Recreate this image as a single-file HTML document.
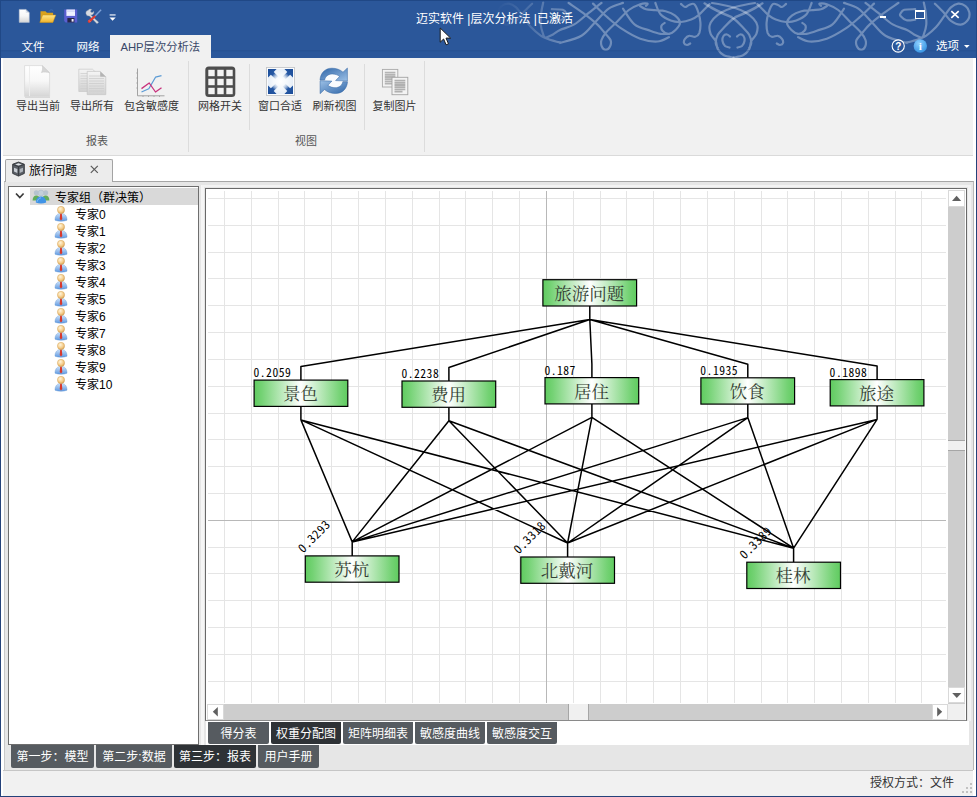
<!DOCTYPE html>
<html lang="zh-CN">
<head>
<meta charset="utf-8">
<title>迈实软件 |层次分析法 |已激活</title>
<style>
*{box-sizing:border-box;margin:0;padding:0}
html,body{width:977px;height:797px;overflow:hidden;background:#fff}
body{position:relative;font-family:"Liberation Sans","Noto Sans CJK SC",sans-serif;font-size:12px;color:#1e1e1e}
.abs{position:absolute}
#hdr{left:0;top:0;width:977px;height:58px;background:#2b579a;border:1px solid #204886;border-bottom:none}
#title{left:416px;top:9.5px;color:#fff;font-size:12px;line-height:18px;white-space:nowrap}
.rtab{top:37px;height:21px;line-height:20px;color:#fff;font-size:11.5px;text-align:center;white-space:nowrap}
#rtab3{left:110px;top:35px;width:100.500px;height:23px;background:#f1f1f1;color:#3a4868;line-height:25px;font-size:11.300px}
#ribbon{left:3px;top:58px;width:970px;height:98px;background:#f1f1f1;border-bottom:1px solid #dadada}
.rbtn{top:98.5px;font-size:11px;line-height:14px;color:#333;white-space:nowrap;text-align:center;width:70px}
.rgrp{top:134px;font-size:11px;line-height:14px;color:#555;text-align:center;width:60px}
.rsep{top:63px;width:1px;height:88px;background:#dcdcdc}
#bl{left:0;top:58px;width:1px;height:739px;background:#24427a}
#br{left:976px;top:58px;width:1px;height:739px;background:#24427a}
#bb{left:0;top:796px;width:977px;height:1px;background:#24427a}
#doctab{left:5px;top:159px;width:107.500px;height:23px;background:#ececec;border:1px solid #a3a3a3;border-bottom:none;border-radius:2px 2px 0 0}
#doctab span{position:absolute;left:23px;top:1.5px;font-size:12px;line-height:18px;color:#000;white-space:nowrap}
#panel{left:4px;top:181px;width:969.500px;height:589px;background:#e6e6e6;border-top:1px solid #a6a6a6;border-right:1px solid #b8b8b8;border-left:1px solid #c8c8c8}
#tree{left:8px;top:186px;width:191px;height:559px;background:#fff;border:1px solid #6e6e6e}
.trow{left:55px;height:17px;margin-top:1.5px;line-height:17px;font-size:12px;color:#000;white-space:nowrap}
.tchild{left:75px}
#canvasbox{left:205px;top:188px;width:762px;height:533px;border:1px solid #696969;border-bottom-color:#8a8a8a;background:#fff}
#vsb{left:948px;top:190px;width:16.500px;height:513.500px;background:#cdcdcd}
#hsb{left:207px;top:703.500px;width:741px;height:16px;background:#cdcdcd}
.sbtn{background:#fff;border:1px solid #d9d9d9;width:17px;height:17px}
#corner{left:948px;top:703.500px;width:16.500px;height:16px;background:#f0f0f0}
.itab{top:722px;height:22px;line-height:24px;color:#fff;font-size:12px;text-align:center;background:#565b60;white-space:nowrap;border-radius:0 0 2px 2px}
.itab.on{background:#2e3236}
.btab{top:745px;height:22.500px;line-height:24px;color:#fff;font-size:12px;text-align:center;background:#565b60;white-space:nowrap;border-radius:0 0 2px 2px}
.btab.on{background:#2e3236}
#status{left:3px;top:770px;width:970px;height:26px;background:#f1f1f1;border-top:1px solid #c6c6c6}
#stxt{left:870px;top:775px;font-size:12px;line-height:16px;color:#333;white-space:nowrap}
svg{position:absolute;overflow:visible}
.nd{font-family:"Liberation Serif","Noto Serif CJK SC",serif;font-size:17.5px;fill:#344034;text-anchor:middle}
.wl{font-family:"Noto Sans Mono CJK SC","Liberation Mono",monospace;font-size:11.6px;letter-spacing:0.5px;fill:#000}
</style>
</head>
<body>
<div id="hdr" class="abs"></div>
<!--ORN--><svg class="abs" style="left:0;top:0" width="977" height="58" viewBox="0 0 977 58"><defs><linearGradient id="ofg" gradientUnits="userSpaceOnUse" x1="496" y1="0" x2="566" y2="0"><stop offset="0" stop-color="#fff" stop-opacity="0"/><stop offset="1" stop-color="#fff" stop-opacity="1"/></linearGradient><mask id="ofm" maskUnits="userSpaceOnUse" x="0" y="0" width="977" height="58"><rect x="0" y="0" width="977" height="58" fill="url(#ofg)"/></mask></defs><g fill="none" stroke="#fff" stroke-opacity="0.32" stroke-width="2.200" stroke-linecap="round"><g mask="url(#ofm)"><path id="orn" d="M545.6 38.0C546.8 37.4 550.6 35.8 553.0 34.5C555.4 33.2 556.5 31.7 560.0 30.0C563.5 28.3 569.5 27.2 574.3 24.4C579.1 21.5 584.2 16.5 588.7 12.9C593.2 9.3 599.4 4.6 601.5 2.9M560.0 43.0C563.6 41.8 575.5 39.4 581.5 35.8C587.5 32.2 591.3 26.0 595.8 21.5C600.3 17.0 604.2 11.7 608.7 8.6C613.2 5.5 620.6 3.8 623.0 2.9M568.6 2.9C571.0 4.6 578.2 9.3 583.0 12.9C587.8 16.5 593.7 21.2 597.2 24.4C600.7 27.6 601.8 29.4 604.0 32.0C606.2 34.6 609.5 37.6 610.5 40.0C611.5 42.4 610.8 44.9 610.0 46.5C609.2 48.1 607.2 49.8 605.8 49.8C604.4 49.8 602.5 48.1 601.8 46.5C601.1 44.9 600.7 42.4 601.5 40.0C602.3 37.6 603.9 35.1 606.5 32.0C609.1 28.9 613.6 25.2 617.3 21.5C621.0 17.8 625.0 12.9 628.8 10.0C632.6 7.1 637.1 5.4 640.2 4.3C643.3 3.2 646.4 3.4 647.4 3.6C648.4 3.9 646.2 5.4 646.0 5.8M593.0 3.6C595.4 5.9 602.5 13.0 607.3 17.2C612.1 21.4 616.1 25.1 621.6 28.7C627.1 32.3 634.2 36.6 640.2 38.7C646.2 40.8 652.6 41.8 657.4 41.5C662.2 41.2 667.0 37.9 668.9 37.2M623.0 8.6C624.9 11.2 630.0 20.7 634.5 24.4C639.0 28.1 645.9 29.1 650.2 30.7C654.5 32.3 657.2 33.3 660.5 33.8C663.8 34.3 668.2 33.8 669.7 33.8M640.0 6.0C641.0 6.5 643.4 8.5 646.0 9.2C648.6 9.9 652.1 9.8 655.4 10.2C658.7 10.5 662.4 10.4 665.6 11.3C668.8 12.2 672.4 13.5 674.8 15.4C677.2 17.3 679.8 20.1 680.0 22.5C680.2 24.9 677.7 27.8 675.8 29.7C673.9 31.6 670.9 33.6 668.7 33.8C666.5 34.0 663.7 32.1 662.5 30.7C661.3 29.3 661.1 26.9 661.5 25.6C661.9 24.3 664.1 23.4 664.6 23.0M655.4 3.0C656.2 4.9 658.0 11.4 660.5 14.3C663.0 17.2 667.3 19.2 670.7 20.5C674.1 21.8 677.6 22.2 681.0 22.0C684.4 21.8 688.3 20.6 691.2 19.5C694.1 18.4 695.9 17.3 698.3 15.4C700.7 13.5 703.6 10.1 705.5 8.2C707.4 6.3 708.9 4.8 709.6 4.1M681.0 4.0C681.7 4.5 683.7 6.8 685.0 7.0C686.3 7.2 687.5 5.5 689.0 5.0C690.5 4.5 692.7 2.9 694.2 4.1C695.8 5.3 697.3 9.2 698.3 12.3C699.3 15.4 700.2 19.1 700.4 22.5C700.6 25.9 700.2 30.4 699.4 32.8C698.5 35.2 697.0 36.3 695.3 36.8C693.6 37.3 690.8 35.4 689.1 35.8C687.4 36.1 685.9 37.7 685.0 38.9C684.1 40.1 683.7 42.0 684.0 43.0C684.3 44.0 686.0 44.9 687.0 45.0C688.0 45.1 689.7 43.8 690.2 43.5M755.0 3.0C753.2 3.3 747.8 4.2 744.0 5.0C740.2 5.8 735.7 6.8 732.0 8.0C728.3 9.2 724.9 10.5 721.9 12.2C718.9 13.9 715.8 16.2 713.7 18.4C711.7 20.6 710.1 23.0 709.6 25.6C709.1 28.2 709.6 31.2 710.6 33.8C711.6 36.4 714.5 38.5 715.7 41.0C716.9 43.5 716.4 46.7 717.8 49.1C719.2 51.5 721.3 53.9 723.9 55.3C726.5 56.7 731.9 57.2 733.5 57.6M761.5 4.1C760.4 4.8 757.8 6.7 755.0 8.2C752.2 9.7 748.6 11.6 745.0 13.3C741.4 15.0 737.0 16.1 733.5 18.5C730.0 20.9 726.6 24.9 724.0 27.6C721.4 30.3 719.2 32.2 717.8 34.8C716.4 37.4 715.7 40.8 715.7 43.0C715.7 45.2 717.4 47.2 717.8 48.0M730.0 36.5C729.5 36.2 728.1 34.6 727.0 34.5C725.9 34.4 724.2 34.9 723.5 36.0C722.8 37.1 722.2 39.3 722.5 41.0C722.8 42.7 723.8 44.9 725.0 46.0C726.2 47.1 728.8 47.2 729.5 47.5M762.5 3.3C761.4 3.9 758.8 5.7 756.0 7.2C753.2 8.7 749.5 10.6 746.0 12.3C742.5 14.0 736.8 16.4 735.0 17.2M532.1 3.7C530.7 5.1 526.2 9.4 523.5 12.3C520.8 15.2 519.0 18.8 516.1 20.9C513.2 22.9 509.2 24.8 506.3 24.6C503.4 24.4 500.3 21.8 498.9 19.7C497.5 17.6 497.3 14.6 497.7 12.3C498.1 10.0 499.5 7.5 501.4 6.1C503.2 4.7 506.4 3.5 508.8 3.7C511.2 3.9 513.6 5.2 516.1 7.4C518.6 9.7 521.0 13.9 523.5 17.2C526.0 20.5 528.0 23.9 530.9 27.0C533.8 30.1 538.2 33.8 540.7 35.6C543.2 37.4 544.8 37.6 545.6 38.0M543.2 2.5C542.9 4.1 541.7 8.6 541.3 12.3C540.9 16.0 540.4 20.9 540.7 24.6C541.0 28.3 542.4 32.2 543.2 34.4C544.0 36.6 543.4 36.8 545.6 38.0C547.9 39.2 554.2 41.1 556.7 41.8C559.2 42.5 559.9 42.3 560.5 42.4M551.8 9.2C553.6 9.3 560.3 9.1 562.8 9.8C565.2 10.5 565.9 12.5 566.5 13.5C567.1 14.5 567.5 14.9 566.5 16.0C565.5 17.1 563.0 19.7 560.5 20.3C558.0 20.9 553.2 19.8 551.8 19.7"/></g><use href="#orn" transform="translate(1467.0 0) scale(-1 1)"/></g><rect x="0" y="50" width="977" height="1.500" fill="#1f4a8a" fill-opacity="0.35"/></svg>
<!--/ORN-->
<div id="title" class="abs">迈实软件 |层次分析法 |已激活</div>
<div class="abs rtab" style="left:10px;width:46px">文件</div>
<div class="abs rtab" style="left:65px;width:46px">网络</div>
<div id="rtab3" class="abs rtab">AHP层次分析法</div>
<div id="ribbon" class="abs"></div>
<div id="bl" class="abs"></div><div id="br" class="abs"></div><div id="bb" class="abs"></div>

<div class="abs rbtn" style="left:3px">导出当前</div>
<div class="abs rbtn" style="left:57px">导出所有</div>
<div class="abs rbtn" style="left:116.5px">包含敏感度</div>
<div class="abs rbtn" style="left:185px">网格开关</div>
<div class="abs rbtn" style="left:245px">窗口合适</div>
<div class="abs rbtn" style="left:299.5px">刷新视图</div>
<div class="abs rbtn" style="left:359.500px">复制图片</div>
<div class="abs rgrp" style="left:67px">报表</div>
<div class="abs rgrp" style="left:276px">视图</div>
<div class="abs rsep" style="left:188px;top:61px;height:91px"></div>
<div class="abs rsep" style="left:249px;top:64px;height:66px"></div>
<div class="abs rsep" style="left:364px;top:64px;height:66px"></div>
<div class="abs rsep" style="left:424px;top:61px;height:91px"></div>

<div id="panel" class="abs"></div>
<div class="abs" style="left:200.500px;top:185px;width:3.300px;height:560px;background:#f6f6f6"></div>
<div class="abs" style="left:202px;top:184.500px;width:769px;height:2.700px;background:#f3f3f3"></div>
<div class="abs" style="left:968px;top:185px;width:3.300px;height:536px;background:#f3f3f3"></div>
<div id="doctab" class="abs"><span>旅行问题</span></div>
<div id="tree" class="abs"></div>
<div class="abs" style="left:30px;top:188px;width:168px;height:17px;background:#d9d9d9"></div>
<div class="abs trow" style="top:188px">专家组（群决策）</div>
<div class="abs trow tchild" style="top:205px">专家0</div>
<div class="abs trow tchild" style="top:222px">专家1</div>
<div class="abs trow tchild" style="top:239px">专家2</div>
<div class="abs trow tchild" style="top:256px">专家3</div>
<div class="abs trow tchild" style="top:273px">专家4</div>
<div class="abs trow tchild" style="top:290px">专家5</div>
<div class="abs trow tchild" style="top:307px">专家6</div>
<div class="abs trow tchild" style="top:324px">专家7</div>
<div class="abs trow tchild" style="top:341px">专家8</div>
<div class="abs trow tchild" style="top:358px">专家9</div>
<div class="abs trow tchild" style="top:375px">专家10</div>

<div class="abs" style="left:206px;top:721px;width:763px;height:24px;background:#fff"></div>
<div id="canvasbox" class="abs"></div>
<!--DIAGRAM-->
<svg class="abs" style="left:206px;top:189px" width="742" height="514" viewBox="206 189 742 514">
<defs><linearGradient id="ng" x1="0" y1="0" x2="1" y2="0"><stop offset="0" stop-color="#5fcb5f"/><stop offset="0.08" stop-color="#74d274"/><stop offset="0.5" stop-color="#ffffff"/><stop offset="0.92" stop-color="#74d274"/><stop offset="1" stop-color="#5fcb5f"/></linearGradient></defs>
<path d="M224.5 191V703M251.5 191V703M278.5 191V703M304.5 191V703M331.5 191V703M358.5 191V703M385.5 191V703M412.5 191V703M439.5 191V703M465.5 191V703M492.5 191V703M519.5 191V703M573.5 191V703M600.5 191V703M626.5 191V703M653.5 191V703M680.5 191V703M707.5 191V703M734.5 191V703M761.5 191V703M787.5 191V703M814.5 191V703M841.5 191V703M868.5 191V703M895.5 191V703M921.5 191V703M208 198.5H946M208 225.5H946M208 252.5H946M208 278.5H946M208 305.5H946M208 332.5H946M208 359.5H946M208 386.5H946M208 413.5H946M208 439.5H946M208 466.5H946M208 493.5H946M208 547.5H946M208 573.5H946M208 600.5H946M208 627.5H946M208 654.5H946M208 681.5H946" stroke="#e5e5e5" stroke-width="1" fill="none" shape-rendering="crispEdges"/>
<path d="M546.5 191V703M208 520.5H946" stroke="#b8b8b8" stroke-width="1" fill="none" shape-rendering="crispEdges"/>
<text class="wl" x="253.5" y="377.4">0.2059</text>
<text class="wl" x="401.4" y="378.3">0.2238</text>
<text class="wl" x="544.4" y="374.9">0.187</text>
<text class="wl" x="700.3" y="375.1">0.1935</text>
<text class="wl" x="829.6" y="376.9">0.1898</text>
<text class="wl" style="font-size:12.2px" transform="translate(303.3 553.4) rotate(-45)" x="0" y="0">0.3293</text>
<text class="wl" style="font-size:12.2px" transform="translate(518.8 554.5) rotate(-45)" x="0" y="0">0.3318</text>
<text class="wl" style="font-size:12.2px" transform="translate(744.8 559.7) rotate(-45)" x="0" y="0">0.3389</text>
<path d="M589.8 306.0V319.5M589.8 319.5L300.9 366.6V380.1M300.9 406.4V419.9M300.9 419.9L352.2 541.9M300.9 419.9L567.6 543.0M300.9 419.9L793.6 548.2M589.8 319.5L448.9 367.5V381.0M448.9 407.3V420.8M448.9 420.8L352.2 541.9M448.9 420.8L567.6 543.0M448.9 420.8L793.6 548.2M589.8 319.5L591.9 364.1V377.6M591.9 403.9V417.4M591.9 417.4L352.2 541.9M591.9 417.4L567.6 543.0M591.9 417.4L793.6 548.2M589.8 319.5L747.8 364.3V377.8M747.8 404.1V417.6M747.8 417.6L352.2 541.9M747.8 417.6L567.6 543.0M747.8 417.6L793.6 548.2M589.8 319.5L877.1 366.1V379.6M877.1 405.9V419.4M877.1 419.4L352.2 541.9M877.1 419.4L567.6 543.0M877.1 419.4L793.6 548.2M352.2 541.9V555.9M567.6 543.0V557.0M793.6 548.2V562.2" stroke="#000" stroke-width="1.500" fill="none" stroke-linejoin="round"/>
<rect x="542.9" y="279.7" width="93.7" height="26.3" fill="url(#ng)" stroke="#000" stroke-width="1.2"/><text class="nd" x="589.2" y="299.8">旅游问题</text>
<rect x="254.1" y="380.1" width="93.7" height="26.3" fill="url(#ng)" stroke="#000" stroke-width="1.2"/><text class="nd" x="300.4" y="400.2">景色</text>
<rect x="402.0" y="381.0" width="93.7" height="26.3" fill="url(#ng)" stroke="#000" stroke-width="1.2"/><text class="nd" x="448.4" y="401.1">费用</text>
<rect x="545.0" y="377.6" width="93.7" height="26.3" fill="url(#ng)" stroke="#000" stroke-width="1.2"/><text class="nd" x="591.4" y="397.7">居住</text>
<rect x="700.9" y="377.8" width="93.7" height="26.3" fill="url(#ng)" stroke="#000" stroke-width="1.2"/><text class="nd" x="747.2" y="397.9">饮食</text>
<rect x="830.2" y="379.6" width="93.7" height="26.3" fill="url(#ng)" stroke="#000" stroke-width="1.2"/><text class="nd" x="876.6" y="399.7">旅途</text>
<rect x="305.3" y="555.9" width="93.7" height="26.3" fill="url(#ng)" stroke="#000" stroke-width="1.2"/><text class="nd" x="351.7" y="576.0">苏杭</text>
<rect x="520.8" y="557.0" width="93.7" height="26.3" fill="url(#ng)" stroke="#000" stroke-width="1.2"/><text class="nd" x="567.1" y="577.1">北戴河</text>
<rect x="746.8" y="562.2" width="93.7" height="26.3" fill="url(#ng)" stroke="#000" stroke-width="1.2"/><text class="nd" x="793.1" y="582.3">桂林</text>
</svg>
<!--/DIAGRAM-->
<div id="vsb" class="abs"></div>
<div id="hsb" class="abs"></div>
<div id="corner" class="abs"></div>
<div class="abs sbtn" style="left:948px;top:190px;width:16.500px"></div>
<div class="abs sbtn" style="left:948px;top:686.500px;width:16.500px;height:16px"></div>
<div class="abs sbtn" style="left:207px;top:703.500px;height:16px"></div>
<div class="abs sbtn" style="left:931.500px;top:703.500px;width:16.500px;height:16px"></div>
<div class="abs" style="left:948px;top:440px;width:16.500px;height:10.700px;background:#f0f0f0;border-top:1.500px solid #a6a6a6;border-bottom:1.500px solid #a6a6a6"></div>
<div class="abs" style="left:568.400px;top:703.500px;width:20.300px;height:16px;background:#f0f0f0;border-left:1.500px solid #a6a6a6;border-right:1.500px solid #a6a6a6"></div>

<div class="abs itab" style="left:208px;width:61px">得分表</div>
<div class="abs itab on" style="left:271px;width:70px">权重分配图</div>
<div class="abs itab" style="left:343px;width:70px">矩阵明细表</div>
<div class="abs itab" style="left:415px;width:70px">敏感度曲线</div>
<div class="abs itab" style="left:487px;width:70px">敏感度交互</div>

<div class="abs btab" style="left:11px;width:83px">第一步：模型</div>
<div class="abs btab" style="left:96px;width:76px">第二步:数据</div>
<div class="abs btab on" style="left:174px;width:82px">第三步：报表</div>
<div class="abs btab" style="left:258px;width:61px">用户手册</div>

<div id="status" class="abs"></div>
<div id="stxt" class="abs">授权方式：文件</div>
<!--ICONS-->
<svg width="0" height="0" style="left:0;top:0"><defs>
<linearGradient id="pgw" x1="0" y1="0" x2="0" y2="1"><stop offset="0" stop-color="#ffffff"/><stop offset="0.5" stop-color="#f7f7f7"/><stop offset="1" stop-color="#d6d6d6"/></linearGradient>
<linearGradient id="pgg" x1="0" y1="0" x2="0" y2="1"><stop offset="0" stop-color="#f4f4f4"/><stop offset="1" stop-color="#d2d2d2"/></linearGradient>
<linearGradient id="fld" x1="0" y1="0" x2="0" y2="1"><stop offset="0" stop-color="#ffe88a"/><stop offset="1" stop-color="#f2b32a"/></linearGradient>
<linearGradient id="rfa" x1="0" y1="0" x2="1" y2="1"><stop offset="0" stop-color="#2f66a8"/><stop offset="1" stop-color="#9cc0e6"/></linearGradient>
<linearGradient id="rfb" x1="1" y1="1" x2="0" y2="0"><stop offset="0" stop-color="#2f66a8"/><stop offset="1" stop-color="#a8c8ea"/></linearGradient>
<radialGradient id="fitg" cx="0.5" cy="0.5" r="0.6"><stop offset="0" stop-color="#ffffff"/><stop offset="0.45" stop-color="#f4f8fc"/><stop offset="1" stop-color="#dfe9f5"/></radialGradient>
<linearGradient id="ar1" x1="0" y1="0" x2="1" y2="1"><stop offset="0" stop-color="#1b4c98"/><stop offset="0.5" stop-color="#2558a4"/><stop offset="0.95" stop-color="#f0f6fb" stop-opacity="0.15"/></linearGradient>
<radialGradient id="hd" cx="0.4" cy="0.35" r="0.7"><stop offset="0" stop-color="#fff6dc"/><stop offset="0.6" stop-color="#f5cd8c"/><stop offset="1" stop-color="#d8a458"/></radialGradient>
<linearGradient id="bd" x1="0" y1="0" x2="0" y2="1"><stop offset="0" stop-color="#cfe3fa"/><stop offset="1" stop-color="#5f9ae2"/></linearGradient>
<radialGradient id="inf" cx="0.4" cy="0.3" r="0.8"><stop offset="0" stop-color="#8fd0ff"/><stop offset="1" stop-color="#2d8de0"/></radialGradient>
</defs></svg>
<!-- quick access toolbar -->
<svg style="left:18px;top:8px" width="13" height="16" viewBox="0 0 13 16"><path d="M1.2 1.4h6.8l3.3 3.2v9.8H1.2z" fill="url(#pgw)" stroke="#aebbd0" stroke-width="0.5"/><path d="M8 1.4v3.2h3.3z" fill="#5d6f8c"/><path d="M7.6 1.6l0.2 3.3 3.4 0.1" fill="#dfe5ee"/></svg>
<svg style="left:39px;top:8px" width="18" height="16" viewBox="0 0 18 16"><path d="M1.5 3.2h5l1.4 1.6h6.2v9.5H1.5z" fill="#d9a21c"/><path d="M10 3.5c1-2 3.5-2.2 4.4-0.2" fill="none" stroke="#3f6fb5" stroke-width="1"/><path d="M0.8 14.4l2.8-7.4h13.2l-2.9 7.4z" fill="url(#fld)" stroke="#c98f14" stroke-width="0.5"/></svg>
<svg style="left:63px;top:8px" width="16" height="16" viewBox="0 0 16 16"><path d="M1.2 1.5h13v13H2.6L1.2 13z" fill="#5a5fd0"/><rect x="3.4" y="1.5" width="8.6" height="6.4" fill="#eef1ff"/><rect x="3.4" y="2.6" width="8.6" height="1" fill="#c9cef5"/><rect x="4.4" y="10" width="7" height="4.5" fill="#26264a"/><rect x="8.6" y="11" width="2" height="2.6" fill="#f0f0ff"/></svg>
<svg style="left:86px;top:8px" width="17" height="16" viewBox="0 0 17 16"><path d="M2.2 2.2a2.6 2.6 0 0 1 3.6-0.6L4.4 3l0.6 1.3 1.4 0.2 1.3-1.2a2.7 2.7 0 0 1-3 3.6l8 7.4-1.7 1.4-7.6-7.8A2.7 2.7 0 0 1 2.2 2.2z" fill="#d7dbe2" stroke="#9097a4" stroke-width="0.4"/><path d="M14.6 1.2l-6 6.2 1 1 6-6.2z" fill="#7ea2d8"/><path d="M8.8 7.2l1.2 1.2-5.8 6.2a1.5 1.5 0 0 1-2.2-2z" fill="#e03a30"/><path d="M3 12.4l1.6 1.6" stroke="#f59a94" stroke-width="0.7"/></svg>
<svg style="left:109px;top:13px" width="8" height="9" viewBox="0 0 8 9"><rect x="0.6" y="1.4" width="6" height="1.1" fill="#fff"/><path d="M0.5 4.4h6.2l-3.1 3.4z" fill="#fff"/></svg>
<!-- window controls -->
<div class="abs" style="left:880px;top:15.5px;width:6.3px;height:2.8px;background:#fff"></div>
<div class="abs" style="left:915px;top:10.300px;width:9.500px;height:8.700px;border:1px solid #fff;border-top-width:2px"></div>
<svg style="left:950px;top:10px" width="10" height="9" viewBox="0 0 10 9"><path d="M1.3 1.2l7.4 6.6M8.7 1.2L1.3 7.8" stroke="#fff" stroke-width="1.7" fill="none"/></svg>
<!-- help / info / options -->
<svg style="left:891px;top:39px" width="15" height="15" viewBox="0 0 15 15"><circle cx="7.2" cy="7" r="6.1" fill="#2b579a" stroke="#fff" stroke-width="1.1"/><text x="7.2" y="10.6" font-family="Liberation Sans, sans-serif" font-weight="bold" font-size="10" fill="#fff" text-anchor="middle">?</text></svg>
<svg style="left:913px;top:39px" width="15" height="15" viewBox="0 0 15 15"><circle cx="7.3" cy="7" r="6.7" fill="url(#inf)"/><text x="7.4" y="11.2" font-family="Liberation Serif, serif" font-weight="bold" font-size="11" fill="#fff" text-anchor="middle">i</text></svg>
<div class="abs" style="left:936px;top:38px;font-size:11.5px;line-height:16px;color:#fff;white-space:nowrap">选项</div>
<svg style="left:963px;top:44px" width="8" height="5" viewBox="0 0 8 5"><path d="M1 1h5.6L3.8 4z" fill="#fff"/></svg>
<!-- ribbon large icons -->
<svg style="left:23px;top:64px" width="30" height="35" viewBox="0 0 30 35"><path d="M2 33.2h25" stroke="#d4d4d4" stroke-width="1.2"/><path d="M1.6 1.6h17.6l7.4 7.2v23.6h-25z" fill="url(#pgw)" stroke="#d9d9d9" stroke-width="0.8"/><path d="M6.5 2v30" stroke="#ededed" stroke-width="1"/><path d="M19.2 1.6c0.6 2.6 0.4 5-0.8 7 2.4-0.8 5.4-0.6 8.2 0.2z" fill="#d6d6d6" stroke="#c6c6c6" stroke-width="0.5"/></svg>
<svg style="left:77px;top:67px" width="31" height="30" viewBox="0 0 31 30"><g><path d="M1.8 2.2h13.6l5.4 5v17.3h-19z" fill="url(#pgg)" stroke="#c9c9c9" stroke-width="0.7"/><path d="M3.5 6.5h14M3.5 9h15M3.5 11.500h15M3.5 14h15M3.5 16.500h15M3.5 19h15M3.5 21.500h15" stroke="#cfcfcf" stroke-width="0.8"/></g><g><path d="M10.2 4.400h13l5.600 5.400v17.800h-18.600z" fill="url(#pgg)" stroke="#c4c4c4" stroke-width="0.7"/><path d="M12 9h11M12 11.500h15M12 14h15M12 16.500h15M12 19h15M12 21.500h15M12 24h15" stroke="#cdcdcd" stroke-width="0.8"/><path d="M23.200 4.400v5.400h5.600z" fill="#b4b4b4"/></g></svg>
<svg style="left:134px;top:66px" width="33" height="32" viewBox="0 0 33 32"><path d="M3.5 2.500v27.300h27" fill="none" stroke="#9a9a9a" stroke-width="0.9"/><path d="M2.300 7h1.200M2.300 12h1.200M2.300 17h1.200M2.300 22h1.200M9 29.800v1.200M14.500 29.800v1.200M20 29.800v1.200M25.500 29.800v1.200" stroke="#9a9a9a" stroke-width="0.8"/><path d="M7.500 26l7.300-3.200 6.700-11.600 6-1.600" fill="none" stroke="#5b9bd5" stroke-width="1.250" stroke-linejoin="round"/><path d="M7.500 22.600l7.700-5.600 6.300 9 6-4.300" fill="none" stroke="#c8327d" stroke-width="1.300" stroke-linejoin="round"/></svg>
<svg style="left:205px;top:66px" width="31" height="31" viewBox="0 0 31 31"><rect x="0.300" y="0.600" width="30" height="30.300" rx="3.500" fill="#4d4d4d"/><g fill="#f3f3f3"><rect x="3.300" y="3.800" width="6.400" height="6.400"/><rect x="12.300" y="3.800" width="6.400" height="6.400"/><rect x="21.300" y="3.800" width="6.400" height="6.400"/><rect x="3.300" y="12.800" width="6.400" height="6.400"/><rect x="12.300" y="12.800" width="6.400" height="6.400"/><rect x="21.300" y="12.800" width="6.400" height="6.400"/><rect x="3.300" y="21.800" width="6.400" height="6.400"/><rect x="12.300" y="21.800" width="6.400" height="6.400"/><rect x="21.300" y="21.800" width="6.400" height="6.400"/></g></svg>
<svg style="left:266px;top:67px" width="29" height="29" viewBox="0 0 29 29"><rect x="0.500" y="0.500" width="28" height="28" fill="#fff" stroke="#c4c6c9" stroke-width="0.900"/><rect x="1.800" y="1.800" width="25.400" height="25.400" fill="url(#fitg)"/><g id="fa"><path d="M2 2h8.600l-2.900 2.900 4.600 4.600-2.800 2.800-4.600-4.600L2 10.600z" fill="url(#ar1)"/></g><use href="#fa" transform="translate(29 0) scale(-1 1)"/><use href="#fa" transform="translate(0 29) scale(1 -1)"/><use href="#fa" transform="translate(29 29) scale(-1 -1)"/></svg>
<svg style="left:319px;top:66px" width="31" height="30" viewBox="0 0 31 30"><ellipse cx="14.700" cy="14.800" rx="9" ry="7" fill="#fafcfe"/><g id="ra"><path d="M1 14C1.500 7 6 2.200 13 2.200C17.500 2.200 21 3.600 24 6.200L28.400 2L28.400 15L16.600 14.600L20.600 10.400C18.600 8.800 16 8 13.500 8C9 8 6.400 10.400 5.600 14Z" fill="url(#rfa)" stroke="#2f62a2" stroke-width="0.500"/></g><use href="#ra" transform="rotate(180 14.750 14.850)"/></svg>
<svg style="left:381px;top:68px" width="29" height="28" viewBox="0 0 29 28"><rect x="1.400" y="1.400" width="15.400" height="17.600" fill="#f3f3f3" stroke="#a9a9a9" stroke-width="0.900"/><path d="M3.800 4.600h10.600M3.800 6.800h10.600M3.800 9h10.600M3.800 11.200h10.600M3.800 13.400h10.600M3.800 15.600h8" stroke="#b4b4b4" stroke-width="1.800"/><rect x="11" y="9.300" width="15.800" height="17.400" fill="#f3f3f3" stroke="#a4a4a4" stroke-width="0.900"/><path d="M13.500 12.600h10.800M13.500 14.800h10.800M13.500 17h10.800M13.500 19.200h10.800M13.500 21.400h10.800M13.500 23.600h8" stroke="#b0b0b0" stroke-width="1.800"/></svg>
<!-- doc tab icon -->
<svg style="left:10.500px;top:161px" width="15" height="16" viewBox="0 0 18 18" preserveAspectRatio="none"><path d="M9 1.200l7 2.400v10.400l-7 3-7-3V3.600z" fill="#5a5f66" stroke="#2e3236" stroke-width="1"/><path d="M2.300 3.900L9 6.300l6.700-2.400M9 6.300v10.400" fill="none" stroke="#2e3236" stroke-width="0.900"/><path d="M3.600 7.600l4 1.400v4.400l-4-1.600z" fill="#c9ced4"/><path d="M14.400 7.600l-4 1.400v4.400l4-1.600z" fill="#aeb4bb"/><path d="M5 3.800l4 1.300 4-1.300-4-1.200z" fill="#dfe3e7"/></svg>
<svg style="left:88.500px;top:164px" width="11" height="11" viewBox="0 0 11 11"><path d="M1.800 1.800l7 7M8.800 1.800l-7 7" stroke="#5a5a5a" stroke-width="1.200" fill="none"/></svg>
<!-- tree icons -->
<svg style="left:15px;top:192px" width="10" height="8" viewBox="0 0 10 8"><path d="M1 1.500l3.800 4 3.800-4" fill="none" stroke="#3a3a3a" stroke-width="1.700"/></svg>
<svg style="left:32px;top:188px" width="18" height="16" viewBox="0 0 18 16"><circle cx="4.300" cy="4.800" r="2.500" fill="#b5c3cf"/><circle cx="13.700" cy="4.800" r="2.500" fill="#b5c3cf"/><path d="M0.600 12.500c0-3.400 1.600-5 3.800-5s3.600 1.600 3.600 5z" fill="#62ad5c"/><path d="M17.400 12.500c0-3.400-1.600-5-3.800-5s-3.600 1.600-3.600 5z" fill="#62ad5c"/><circle cx="9" cy="5" r="2.900" fill="#c3d0db" stroke="#9fb0bf" stroke-width="0.400"/><path d="M3.800 14.600c0-4.200 2.200-6.200 5.200-6.200s5.200 2 5.200 6.200c-3 1.200-7.400 1.200-10.400 0z" fill="#3f93e6"/><path d="M5 13.800c1-2.600 2.200-3.800 4-4" stroke="#8cc4f7" stroke-width="0.800" fill="none"/></svg>
<svg style="left:54px;top:205px" width="14" height="17" viewBox="0 0 14 17"><path d="M1 15.200c0-4.600 2.400-6.800 6-6.800s6 2.200 6 6.800c-3.600 1.400-8.400 1.400-12 0z" fill="url(#bd)" stroke="#5b8fd0" stroke-width="0.400"/><path d="M6.200 8.600h1.600l0.500 5.400-1.300 1.400-1.300-1.400z" fill="#d8382c"/><circle cx="7" cy="4.900" r="3.600" fill="url(#hd)" stroke="#cf9a48" stroke-width="0.400"/></svg>
<svg style="left:54px;top:222px" width="14" height="17" viewBox="0 0 14 17"><path d="M1 15.200c0-4.600 2.400-6.800 6-6.800s6 2.200 6 6.800c-3.600 1.400-8.400 1.400-12 0z" fill="url(#bd)" stroke="#5b8fd0" stroke-width="0.400"/><path d="M6.200 8.600h1.600l0.500 5.400-1.300 1.400-1.300-1.400z" fill="#d8382c"/><circle cx="7" cy="4.900" r="3.600" fill="url(#hd)" stroke="#cf9a48" stroke-width="0.400"/></svg>
<svg style="left:54px;top:239px" width="14" height="17" viewBox="0 0 14 17"><path d="M1 15.200c0-4.600 2.400-6.800 6-6.800s6 2.200 6 6.800c-3.600 1.400-8.400 1.400-12 0z" fill="url(#bd)" stroke="#5b8fd0" stroke-width="0.400"/><path d="M6.200 8.600h1.600l0.500 5.400-1.300 1.400-1.300-1.400z" fill="#d8382c"/><circle cx="7" cy="4.900" r="3.600" fill="url(#hd)" stroke="#cf9a48" stroke-width="0.400"/></svg>
<svg style="left:54px;top:256px" width="14" height="17" viewBox="0 0 14 17"><path d="M1 15.200c0-4.600 2.400-6.800 6-6.800s6 2.200 6 6.800c-3.600 1.400-8.400 1.400-12 0z" fill="url(#bd)" stroke="#5b8fd0" stroke-width="0.400"/><path d="M6.200 8.600h1.600l0.500 5.400-1.300 1.400-1.300-1.400z" fill="#d8382c"/><circle cx="7" cy="4.900" r="3.600" fill="url(#hd)" stroke="#cf9a48" stroke-width="0.400"/></svg>
<svg style="left:54px;top:273px" width="14" height="17" viewBox="0 0 14 17"><path d="M1 15.200c0-4.600 2.400-6.800 6-6.800s6 2.200 6 6.800c-3.600 1.400-8.400 1.400-12 0z" fill="url(#bd)" stroke="#5b8fd0" stroke-width="0.400"/><path d="M6.200 8.600h1.600l0.500 5.400-1.300 1.400-1.300-1.400z" fill="#d8382c"/><circle cx="7" cy="4.900" r="3.600" fill="url(#hd)" stroke="#cf9a48" stroke-width="0.400"/></svg>
<svg style="left:54px;top:290px" width="14" height="17" viewBox="0 0 14 17"><path d="M1 15.200c0-4.600 2.400-6.800 6-6.800s6 2.200 6 6.800c-3.600 1.400-8.400 1.400-12 0z" fill="url(#bd)" stroke="#5b8fd0" stroke-width="0.400"/><path d="M6.200 8.600h1.600l0.500 5.400-1.300 1.400-1.300-1.400z" fill="#d8382c"/><circle cx="7" cy="4.900" r="3.600" fill="url(#hd)" stroke="#cf9a48" stroke-width="0.400"/></svg>
<svg style="left:54px;top:307px" width="14" height="17" viewBox="0 0 14 17"><path d="M1 15.200c0-4.600 2.400-6.800 6-6.800s6 2.200 6 6.800c-3.600 1.400-8.400 1.400-12 0z" fill="url(#bd)" stroke="#5b8fd0" stroke-width="0.400"/><path d="M6.200 8.600h1.600l0.500 5.400-1.300 1.400-1.300-1.400z" fill="#d8382c"/><circle cx="7" cy="4.900" r="3.600" fill="url(#hd)" stroke="#cf9a48" stroke-width="0.400"/></svg>
<svg style="left:54px;top:324px" width="14" height="17" viewBox="0 0 14 17"><path d="M1 15.200c0-4.600 2.400-6.800 6-6.800s6 2.200 6 6.800c-3.600 1.400-8.400 1.400-12 0z" fill="url(#bd)" stroke="#5b8fd0" stroke-width="0.400"/><path d="M6.200 8.600h1.600l0.500 5.400-1.300 1.400-1.300-1.400z" fill="#d8382c"/><circle cx="7" cy="4.900" r="3.600" fill="url(#hd)" stroke="#cf9a48" stroke-width="0.400"/></svg>
<svg style="left:54px;top:341px" width="14" height="17" viewBox="0 0 14 17"><path d="M1 15.200c0-4.600 2.400-6.800 6-6.800s6 2.200 6 6.800c-3.600 1.400-8.400 1.400-12 0z" fill="url(#bd)" stroke="#5b8fd0" stroke-width="0.400"/><path d="M6.200 8.600h1.600l0.500 5.400-1.300 1.400-1.300-1.400z" fill="#d8382c"/><circle cx="7" cy="4.900" r="3.600" fill="url(#hd)" stroke="#cf9a48" stroke-width="0.400"/></svg>
<svg style="left:54px;top:358px" width="14" height="17" viewBox="0 0 14 17"><path d="M1 15.200c0-4.600 2.400-6.800 6-6.800s6 2.200 6 6.800c-3.600 1.400-8.400 1.400-12 0z" fill="url(#bd)" stroke="#5b8fd0" stroke-width="0.400"/><path d="M6.200 8.600h1.600l0.500 5.400-1.300 1.400-1.300-1.400z" fill="#d8382c"/><circle cx="7" cy="4.900" r="3.600" fill="url(#hd)" stroke="#cf9a48" stroke-width="0.400"/></svg>
<svg style="left:54px;top:375px" width="14" height="17" viewBox="0 0 14 17"><path d="M1 15.200c0-4.600 2.400-6.800 6-6.800s6 2.200 6 6.800c-3.600 1.400-8.400 1.400-12 0z" fill="url(#bd)" stroke="#5b8fd0" stroke-width="0.400"/><path d="M6.200 8.600h1.600l0.500 5.400-1.300 1.400-1.300-1.400z" fill="#d8382c"/><circle cx="7" cy="4.900" r="3.600" fill="url(#hd)" stroke="#cf9a48" stroke-width="0.400"/></svg>
<!-- scrollbar arrows -->
<svg style="left:948px;top:190px" width="17" height="17" viewBox="0 0 17 17"><path d="M4 11l4.600-5.200L13.200 11z" fill="#606060"/></svg>
<svg style="left:948px;top:686px" width="17" height="17" viewBox="0 0 17 17"><path d="M4.200 7l4.600 5 4.600-5z" fill="#606060"/></svg>
<svg style="left:207px;top:703px" width="17" height="17" viewBox="0 0 17 17"><path d="M10.800 4l-5 4.800 5 4.800z" fill="#606060"/></svg>
<svg style="left:931px;top:703px" width="17" height="17" viewBox="0 0 17 17"><path d="M6.200 4.200l5 4.600-5 4.600z" fill="#606060"/></svg>
<!--/ICONS-->
<svg class="abs" style="left:439px;top:27px;z-index:9" width="14" height="20" viewBox="0 0 14 20"><path d="M1.200 1v14.200l3.400-3.200 2.500 5.800 2.400-1-2.500-5.700h4.600z" fill="#fff" stroke="#1a1a1a" stroke-width="1"/></svg>
<svg class="abs" style="left:961px;top:782px" width="13" height="13" viewBox="0 0 13 13"><g fill="#c2c2c2"><rect x="9" y="1" width="2" height="2"/><rect x="5" y="5" width="2" height="2"/><rect x="9" y="5" width="2" height="2"/><rect x="1" y="9" width="2" height="2"/><rect x="5" y="9" width="2" height="2"/><rect x="9" y="9" width="2" height="2"/></g></svg>
</body>
</html>
